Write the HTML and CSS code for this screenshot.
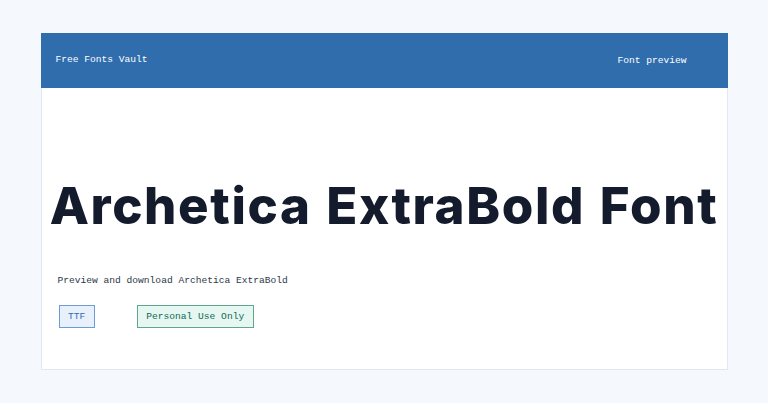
FILE: index.html
```html
<!DOCTYPE html>
<html lang="en">
<head>
    <meta charset="UTF-8">
    <meta name="viewport" content="width=device-width, initial-scale=1.0">
    <title>Archetica ExtraBold Font</title>
    <link rel="stylesheet" href="styles.css">
</head>
<body>
    <div class="card">
        <div class="topbar">
            <span class="brand">Free Fonts Vault</span>
            <span class="nav">Font preview</span>
        </div>

        <div class="content">
            <h1 class="title">Archetica ExtraBold Font</h1>
            <p class="lead">Preview and download Archetica ExtraBold</p>
            <div class="tags">
                <span class="tag tag-format">TTF</span>
                <span class="tag tag-license">Personal Use Only</span>
            </div>
        </div>
    </div>
</body>
</html>
```

FILE: styles.css
```css
body {
    margin: 0;
    padding-top: 33px;
    background-color: #f5f9fe;
    font-family: 'Liberation Mono', monospace;
    font-size: 9.6px;
}

.card {
    width: 687px;
    height: 337px;
    margin: 0 auto;
    box-sizing: border-box;
    background-color: #fff;
    border: 1px solid #e2e8f0;
    border-top: none;
}

.topbar {
    display: flex;
    justify-content: space-between;
    align-items: center;
    height: 55px;
    margin: 0 -1px;
    padding: 0 41px 0 15px;
    background-color: #2f6dad;
    color: #fff;
}

.brand {
    margin-top: -2px;
}

.content {
    padding: 0 16px;
}

.title {
    margin: 88px -16px 0;
    font-family: 'Inter', sans-serif;
    font-size: 51px;
    font-weight: 800;
    line-height: 60px;
    letter-spacing: 1.6px;
    word-spacing: 2px;
    text-align: center;
    color: #131b2c;
    white-space: nowrap;
}

.lead {
    margin: 39px 0 0;
    color: #2d3748;
}

.tags {
    display: flex;
    gap: 42px;
    margin-top: 19px;
    padding-left: 1px;
}

.tag {
    display: inline-block;
    height: 23px;
    line-height: 21px;
    box-sizing: border-box;
    padding: 0 8.5px;
}

.tag-format {
    background-color: #e8f0fc;
    border: 1px solid #6d9bd4;
    color: #2f6dad;
}

.tag-license {
    background-color: #e6f6f0;
    border: 1px solid #5ea592;
    color: #0f6b58;
}
```
